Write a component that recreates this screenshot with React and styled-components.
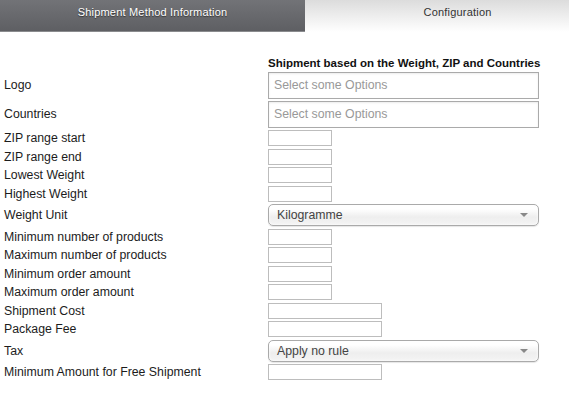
import React from "react";
import styled, { createGlobalStyle } from "styled-components";

const GlobalStyle = createGlobalStyle`
  body {
    margin: 0;
    background: #fff;
    font-family: "Liberation Sans", Arial, sans-serif;
    overflow: hidden;
  }
`;

const Page = styled.div`
  width: 569px;
  height: 393px;
  overflow: hidden;
`;

const TabBar = styled.div`
  display: flex;
  height: 32px;
  width: 610px;
`;

const Tab = styled.div`
  flex: 0 0 305px;
  box-sizing: border-box;
  padding-top: 5px;
  text-align: center;
  font-size: 11px;
  line-height: 14px;
  letter-spacing: 0.2px;
  color: ${(p) => (p.active ? "#fff" : "#333")};
  text-shadow: ${(p) => (p.active ? "0 1px 1px #333" : "none")};
  background: ${(p) =>
    p.active
      ? "linear-gradient(#727377, #5e5f63)"
      : "linear-gradient(#dcdcdc, #ffffff)"};
  border-bottom: ${(p) => (p.active ? "1px solid #8a8b8e" : "none")};
`;

const Form = styled.div`
  display: grid;
  grid-template-columns: 264px 1fr;
  row-gap: 2.5px;
  align-items: center;
  margin-top: 23.5px;
  padding-left: 4px;
`;

const Heading = styled.div`
  grid-column: 2;
  font-size: 11.5px;
  font-weight: bold;
  line-height: 14px;
  color: #111;
  white-space: nowrap;
`;

const Label = styled.div`
  font-size: 12.3px;
  line-height: 14px;
  color: #1c1c1c;
  white-space: nowrap;
`;

const MultiSelect = styled.div`
  box-sizing: border-box;
  width: 271px;
  height: 26.5px;
  border: 1px solid #aaa;
  box-shadow: inset 0 1px 2px rgba(0, 0, 0, 0.08);
  padding-left: 5px;
  display: flex;
  align-items: center;
  font-size: 12.3px;
  color: #999;
`;

const Dropdown = styled.div`
  box-sizing: border-box;
  width: 271px;
  height: 22px;
  border: 1px solid #aaa;
  border-radius: 5px;
  background: linear-gradient(#ffffff 20%, #eeeeee 60%, #f4f4f4);
  box-shadow: 0 0 3px #fff inset, 0 1px 1px rgba(0, 0, 0, 0.1);
  padding: 0 8px;
  display: flex;
  align-items: center;
  justify-content: space-between;
  font-size: 12.3px;
  color: #444;
`;

const Arrow = styled.span`
  width: 0;
  height: 0;
  border-left: 4px solid transparent;
  border-right: 4px solid transparent;
  border-top: 4px solid #888;
  margin-right: 2px;
`;

const TextInput = styled.div`
  box-sizing: border-box;
  width: ${(p) => (p.wide ? "114px" : "64px")};
  height: 16px;
  border: 1px solid #bdbdbd;
  background: #fff;
`;

const fields = [
  { label: "Logo", kind: "multi" },
  { label: "Countries", kind: "multi" },
  { label: "ZIP range start" },
  { label: "ZIP range end" },
  { label: "Lowest Weight" },
  { label: "Highest Weight" },
  { label: "Weight Unit", kind: "select", value: "Kilogramme" },
  { label: "Minimum number of products" },
  { label: "Maximum number of products" },
  { label: "Minimum order amount" },
  { label: "Maximum order amount" },
  { label: "Shipment Cost", wide: true },
  { label: "Package Fee", wide: true },
  { label: "Tax", kind: "select", value: "Apply no rule" },
  { label: "Minimum Amount for Free Shipment", wide: true },
];

const Control = ({ field }) => {
  if (field.kind === "multi") return <MultiSelect>Select some Options</MultiSelect>;
  if (field.kind === "select")
    return (
      <Dropdown>
        <span>{field.value}</span>
        <Arrow />
      </Dropdown>
    );
  return <TextInput wide={field.wide} />;
};

export default function App() {
  return (
    <Page>
      <GlobalStyle />
      <TabBar>
        <Tab active>Shipment Method Information</Tab>
        <Tab>Configuration</Tab>
      </TabBar>
      <Form>
        <Heading>Shipment based on the Weight, ZIP and Countries</Heading>
        {fields.map((f) => (
          <React.Fragment key={f.label}>
            <Label>{f.label}</Label>
            <Control field={f} />
          </React.Fragment>
        ))}
      </Form>
    </Page>
  );
}
